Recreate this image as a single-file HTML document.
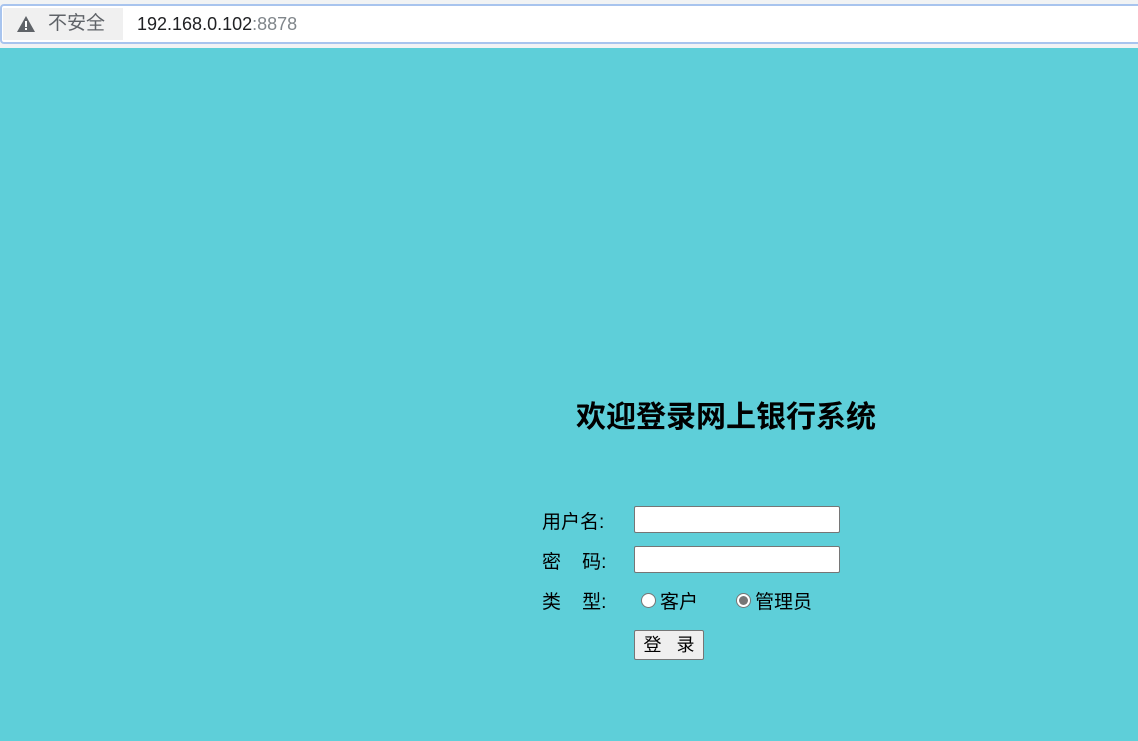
<!DOCTYPE html>
<html><head><meta charset="utf-8"><style>
body{margin:0;width:1138px;height:741px;overflow:hidden;background:#5ecfd9;font-family:"Liberation Sans","Noto Sans CJK SC",sans-serif;position:relative}
.bar{position:absolute;left:0;top:0;width:1138px;height:48px;background:#f1f3f4}
.url{position:absolute;left:0;top:4px;width:1142px;height:40px;background:#fff;border:2px solid #a8c4ee;border-radius:4px;box-sizing:border-box}
.sec{position:absolute;left:1px;top:2px;width:120px;height:32px;background:#f0f0f0;color:#5f6368;font-size:19px;line-height:32px}
.sec span{position:absolute;left:45px}
.addr{position:absolute;left:135px;top:3px;font-size:18px;line-height:30px;color:#202124}
.abs{position:absolute;font-size:19px;color:#000;white-space:nowrap}
.inp{position:absolute;width:206px;height:27px;background:#fff;border:1px solid #767676;border-radius:2px;box-sizing:border-box}
.rad{position:absolute;width:15px;height:15px;border-radius:50%;border:1px solid #767676;background:#fff;box-sizing:border-box}
</style></head><body>
<div class="bar"><div class="url"><div class="sec"><svg style="position:absolute;left:14px;top:8px" width="18" height="16" viewBox="0 0 18 16"><path d="M9 0L18 16H0Z" fill="#5f6368"/><rect x="8" y="5" width="2" height="6" fill="#fff"/><rect x="8" y="12" width="2" height="2" fill="#fff"/></svg><span>不安全</span></div>
<div class="addr">192.168.0.102<span style="color:#80868b">:8878</span></div></div></div>
<div class="abs" style="left:576px;top:397px;font-size:30px;font-weight:bold;line-height:42px">欢迎登录网上银行系统</div>
<div class="abs" style="left:542px;top:507px">用户名:</div>
<div class="abs" style="left:542px;top:547px">密&nbsp;&nbsp;&nbsp;&nbsp;码:</div>
<div class="abs" style="left:542px;top:587px">类&nbsp;&nbsp;&nbsp;&nbsp;型:</div>
<div class="inp" style="left:634px;top:506px"></div>
<div class="inp" style="left:634px;top:546px"></div>
<div class="rad" style="left:641px;top:593px"></div>
<div class="abs" style="left:660px;top:587px">客户</div>
<div class="rad" style="left:736px;top:593px"><div style="position:absolute;left:2px;top:2px;width:9px;height:9px;border-radius:50%;background:#767676"></div></div>
<div class="abs" style="left:755px;top:587px">管理员</div>
<div style="position:absolute;left:634px;top:630px;width:70px;height:30px;background:#efefef;border:1px solid #767676;border-radius:2px;box-sizing:border-box;font-size:18px;line-height:28px;text-align:center">登&nbsp;&nbsp;&nbsp;录</div>
</body></html>
